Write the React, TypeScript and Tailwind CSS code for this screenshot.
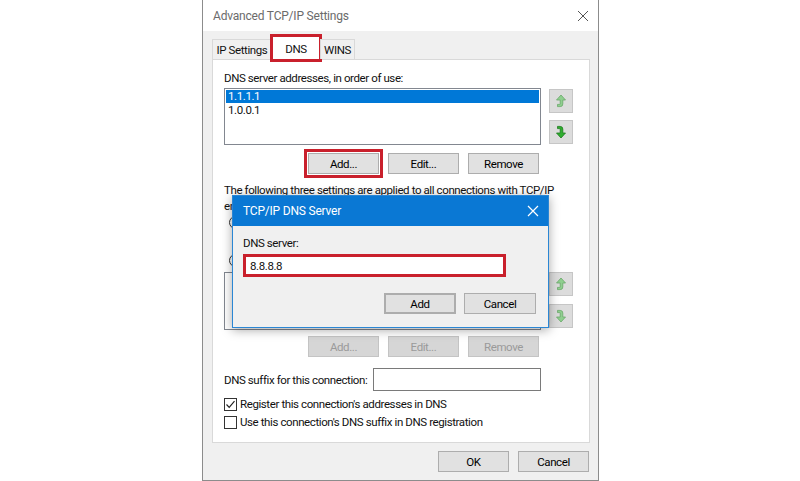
import React from 'react';

const FONT = "font-['Segoe_UI','Roboto','Noto_Sans',sans-serif]";

function Arrow({ dir, on }: { dir: 'up' | 'down'; on: boolean }) {
  const fill = on ? '#2fae2f' : '#8fcf8f';
  const stroke = on ? '#1d7a1d' : '#6aa86a';
  return (
    <svg width="12" height="14" viewBox="0 0 12 14" style={{ transform: dir === 'down' ? 'scaleY(-1)' : undefined }}>
      <path
        d="M6 1 L10.5 6 H7.8 V10 Q7.8 12.6 5.2 12.6 H2.5 V10.4 H4.8 Q5.2 10.4 5.2 10 V6 H1.5 Z"
        fill={fill}
        stroke={stroke}
        strokeWidth="0.8"
        strokeLinejoin="round"
      />
    </svg>
  );
}

function ArrowBtn({ dir, on }: { dir: 'up' | 'down'; on: boolean }) {
  return (
    <div className="w-[24px] h-[24px] bg-[#dcdcdc] border border-[#c6c6c6] flex items-center justify-center">
      <Arrow dir={dir} on={on} />
    </div>
  );
}

function Btn({ children, disabled, w = 'w-[71px]', extra = '' }: { children: React.ReactNode; disabled?: boolean; w?: string; extra?: string }) {
  return (
    <div
      className={`${w} h-[21px] shrink-0 flex items-center justify-center border ${
        disabled ? 'bg-[#d6d6d6] border-[#c4c4c4] text-[#9a9a9a]' : 'bg-[#e1e1e1] border-[#adadad] text-black'
      } ${extra}`}
    >
      {children}
    </div>
  );
}

function Check({ checked }: { checked?: boolean }) {
  return (
    <div className="w-[13px] h-[13px] shrink-0 border border-[#333] bg-white flex items-center justify-center">
      {checked && (
        <svg width="11" height="11" viewBox="0 0 11 11">
          <path d="M1.5 5.5 L4.2 8.3 L9.5 2.2" fill="none" stroke="#222" strokeWidth="1.2" />
        </svg>
      )}
    </div>
  );
}

function Radio({ checked }: { checked?: boolean }) {
  return (
    <div className="w-[13px] h-[13px] shrink-0 rounded-full border border-[#333] bg-white flex items-center justify-center">
      {checked && <div className="w-[7px] h-[7px] rounded-full bg-[#222]" />}
    </div>
  );
}

export default function App() {
  return (
    <div className={`relative w-[800px] h-[481px] bg-white overflow-hidden text-[11.5px] tracking-[-0.4px] leading-[14px] text-[#111] whitespace-nowrap ${FONT}`}>
      {/* Advanced TCP/IP Settings window */}
      <div className="ml-[202px] w-[397px] h-[481px] border-x border-b border-[#8c8c8c] bg-[#f0f0f0] flex flex-col">
        <div className="h-[31px] bg-white flex items-center justify-between pl-[10px] pr-[9px] shrink-0">
          <span className="text-[12px] tracking-[-0.2px] text-[#6b6b6b]">Advanced TCP/IP Settings</span>
          <svg width="12" height="12" viewBox="0 0 12 12">
            <path d="M1 1 L11 11 M11 1 L1 11" stroke="#555" strokeWidth="1" />
          </svg>
        </div>

        <div className="pl-[9px] pt-[5px]">
          {/* Tabs */}
          <div className="flex items-end h-[23px] relative z-10">
            <div className="w-[60px] h-[20px] border border-b-0 border-[#d9d9d9] bg-[#f0f0f0] flex items-center justify-center">
              IP Settings
            </div>
            <div className="w-[48px] h-[24px] bg-white border-x border-t border-[#d9d9d9] flex items-center justify-center outline outline-[3px] outline-[#c9202c] -outline-offset-1 mb-[-1px]">
              DNS
            </div>
            <div className="w-[35px] h-[20px] border border-b-0 border-[#d9d9d9] bg-[#f0f0f0] flex items-center justify-center">
              WINS
            </div>
          </div>

          {/* Tab panel */}
          <div className="w-[378px] h-[384px] border border-[#d9d9d9] bg-white pl-[11px] pt-[11px] flex flex-col">
            <div>DNS server addresses, in order of use:</div>
            <div className="flex mt-[3px]">
              <div className="w-[317px] h-[57px] border border-[#828790] bg-white p-[1px]">
                <div className="h-[13px] bg-[#0078d7] text-white leading-[13px] pl-[2px]">1.1.1.1</div>
                <div className="h-[13px] leading-[13px] pl-[2px] mt-[1px]">1.0.0.1</div>
              </div>
              <div className="ml-[8px] flex flex-col gap-[7px] pt-[1px]">
                <ArrowBtn dir="up" on={false} />
                <ArrowBtn dir="down" on />
              </div>
            </div>
            <div className="flex gap-[9px] mt-[8px] ml-[84px]">
              <Btn extra="outline outline-[3px] outline-[#c9202c] outline-offset-[1px]">Add...</Btn>
              <Btn>Edit...</Btn>
              <Btn>Remove</Btn>
            </div>
            <div className="mt-[9px]">The following three settings are applied to all connections with TCP/IP</div>
            <div className="mt-[2px] w-[8px] overflow-hidden">enabled.</div>
            {/* Options hidden behind the modal: only the controls peek out */}
            <div className="flex items-center h-[14px] mt-[2px] ml-[5px]">
              <Radio checked />
            </div>
            <div className="h-[14px] mt-[5px]" />
            <div className="flex items-center h-[14px] mt-[5px] ml-[5px]">
              <Radio />
            </div>
            <div className="flex mt-[5px]">
              <div className="w-[317px] h-[58px] border border-[#828790] bg-white" />
              <div className="ml-[8px] flex flex-col gap-[8px]">
                <ArrowBtn dir="up" on={false} />
                <ArrowBtn dir="down" on={false} />
              </div>
            </div>
            <div className="flex gap-[9px] mt-[6px] ml-[84px]">
              <Btn disabled>Add...</Btn>
              <Btn disabled>Edit...</Btn>
              <Btn disabled>Remove</Btn>
            </div>
            <div className="flex items-center mt-[11px]">
              <span className="w-[149px]">DNS suffix for this connection:</span>
              <div className="w-[168px] h-[23px] border border-[#7a7a7a] bg-white" />
            </div>
            <div className="flex items-center gap-[3px] mt-[6px]">
              <Check checked />
              <span>Register this connection's addresses in DNS</span>
            </div>
            <div className="flex items-center gap-[3px] mt-[4px]">
              <Check />
              <span>Use this connection's DNS suffix in DNS registration</span>
            </div>
          </div>

          <div className="flex justify-end gap-[9px] pr-[9px] mt-[8px]">
            <Btn w="w-[71px]">OK</Btn>
            <Btn w="w-[71px]">Cancel</Btn>
          </div>
        </div>
      </div>

      {/* TCP/IP DNS Server dialog (overlay) */}
      <div className="absolute left-[232px] top-[195px] w-[317px] h-[133px] border border-[#2a86d4] bg-[#f0f0f0] shadow-[0_2px_10px_rgba(0,0,0,0.35)] flex flex-col">
        <div className="h-[30px] bg-[#0a78d4] flex items-center justify-between pl-[10px] pr-[9px] shrink-0">
          <span className="text-white text-[12px] tracking-[-0.2px]">TCP/IP DNS Server</span>
          <svg width="12" height="12" viewBox="0 0 12 12">
            <path d="M1 1 L11 11 M11 1 L1 11" stroke="#fff" strokeWidth="1.2" />
          </svg>
        </div>
        <div className="pl-[10px] pt-[10px]">
          <div>DNS server:</div>
          <div className="mt-[4px] w-[263px] h-[23px] border-[3px] border-[#c9202c] bg-white flex items-center pl-[4px]">
            8.8.8.8
          </div>
          <div className="flex justify-end gap-[8px] pr-[12px] mt-[16px]">
            <Btn w="w-[72px]" extra="border-[2px] border-[#0078d7]">Add</Btn>
            <Btn w="w-[72px]">Cancel</Btn>
          </div>
        </div>
      </div>
    </div>
  );
}
